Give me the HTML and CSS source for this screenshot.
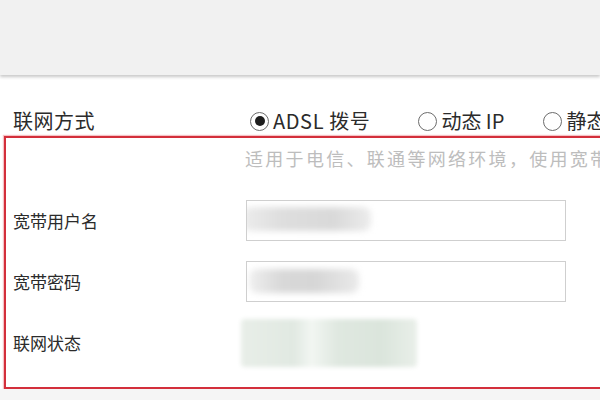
FILE: index.html
```html
<!DOCTYPE html>
<html lang="zh-CN">
<head>
<meta charset="utf-8">
<link rel="stylesheet" href="styles.css">
</head>
<body>
<div class="topbar"></div>
<main class="panel">
  <div class="mode-row">
    <div class="mode-label">联网方式</div>
    <div class="radios">
      <span class="radio checked"><span class="dot"></span></span><span class="rtext r1">ADSL 拨号</span>
      <span class="radio"></span><span class="rtext r2">动态 IP</span>
      <span class="radio"></span><span class="rtext">静态 IP</span>
    </div>
  </div>
  <section class="box">
    <div class="row hint-row">
      <div class="label"></div>
      <div class="hint">适用于电信、联通等网络环境，使用宽带拨号上网</div>
    </div>
    <div class="row input-row r-user">
      <div class="label">宽带用户名</div>
      <div class="input"><span class="blob blob-user"></span></div>
    </div>
    <div class="row input-row r-pass">
      <div class="label">宽带密码</div>
      <div class="input"><span class="blob blob-pass"></span></div>
    </div>
    <div class="row status-row">
      <div class="label">联网状态</div>
      <div class="status"><span class="blob-status"></span></div>
    </div>
  </section>
  <div class="footer"></div>
</main>
</body>
</html>
```
FILE: styles.css
```css
html, body {
  margin: 0;
  padding: 0;
  width: 600px;
  height: 400px;
  overflow: hidden;
  background: #ffffff;
  font-family: "Noto Sans CJK SC", "Noto Sans", sans-serif;
  color: #2b2b2b;
}

.topbar {
  height: 75px;
  background: #f1f1f1;
  box-shadow: 0 2px 3px rgba(0, 0, 0, 0.22);
  position: relative;
  z-index: 1;
}

.panel {
  background: #ffffff;
  width: 640px;
}

.mode-row {
  display: flex;
  align-items: center;
  height: 30px;
  margin-top: 31px;
  padding-left: 13px;
}

.mode-label {
  width: 237px;
  font-size: 20px;
  letter-spacing: 0.5px;
  color: #2b2b2b;
  line-height: 30px;
}

.radios {
  display: flex;
  align-items: center;
  white-space: nowrap;
}

.radio {
  box-sizing: border-box;
  width: 19px;
  height: 19px;
  border: 1.5px solid #6c6c6c;
  border-radius: 50%;
  display: flex;
  align-items: center;
  justify-content: center;
  margin-right: 4px;
}

.radio .dot {
  width: 10px;
  height: 10px;
  border-radius: 50%;
  background: #1e1e1e;
}

.rtext {
  font-size: 20px;
  line-height: 30px;
  color: #2b2b2b;
}

.r1 { margin-right: 48px; letter-spacing: 0.6px; }
.r2 { margin-right: 39px; }

.box {
  margin-left: 4px;
  border: 2px solid #d32f3b;
  box-shadow: 0 0 1px 1px rgba(230, 80, 90, 0.35);
  padding: 0 0 24px 7px;
}

.row {
  display: grid;
  grid-template-columns: 232px 1fr;
  align-items: center;
}

.label {
  font-size: 17px;
  color: #2b2b2b;
}

.hint-row {
  height: 40px;
}

.hint {
  font-size: 18px;
  letter-spacing: 2.3px;
  color: #bdbdbd;
  white-space: nowrap;
}

.input-row {
  height: 41px;
}

.r-user { margin-top: 22px; }
.r-pass { margin-top: 20px; }

.input {
  box-sizing: border-box;
  width: 320px;
  height: 41px;
  border: 1.5px solid #cfcfcf;
  margin-left: 1px;
  position: relative;
  overflow: hidden;
}

.blob {
  position: absolute;
  border-radius: 8px;
  filter: blur(3px);
}

.blob-user {
  left: -4px;
  top: 6px;
  width: 128px;
  height: 24px;
  background: linear-gradient(90deg, #ececec 0%, #dedede 30%, #d9d9d9 70%, #ececec 100%);
}

.blob-pass {
  left: 2px;
  top: 7px;
  width: 110px;
  height: 24px;
  background: linear-gradient(90deg, #efefef 0%, #d8d8d8 30%, #d6d6d6 60%, #eaeaea 100%);
}

.status-row {
  height: 42px;
  margin-top: 19px;
}

.status {
  height: 42px;
  position: relative;
}

.blob-status {
  position: absolute;
  left: -4px;
  top: -2px;
  width: 176px;
  height: 48px;
  background: linear-gradient(90deg, #e8eee8 0%, #e1e9e2 30%, #f2f6f2 40%, #dfe8e0 55%, #dbe5dc 80%, #e9efe9 100%);
  filter: blur(2px);
  border-radius: 4px;
}

.footer {
  height: 12px;
  background: #f5f5f5;
}
```
